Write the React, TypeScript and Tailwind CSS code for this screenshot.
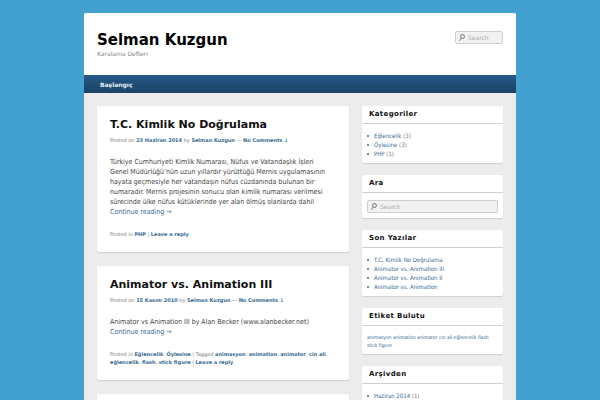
import React from 'react';

interface Post {
  title: string;
  date: string;
  body: string;
  categories: string[];
  tags: string[];
}

const posts: Post[] = [
  {
    title: 'T.C. Kimlik No Doğrulama',
    date: '23 Haziran 2014',
    body: 'Türkiye Cumhuriyeti Kimlik Numarası, Nüfus ve Vatandaşlık İşleri Genel Müdürlüğü’nün uzun yıllardır yürüttüğü Mernis uygulamasının hayata geçmesiyle her vatandaşın nüfus cüzdanında bulunan bir numaradır. Mernis projesinin sonucu olan kimlik numarası verilmesi sürecinde ülke nüfus kütüklerinde yer alan ölmüş olanlarda dahil',
    categories: ['PHP'],
    tags: [],
  },
  {
    title: 'Animator vs. Animation III',
    date: '15 Kasım 2010',
    body: 'Animator vs Animation III by Alan Becker (www.alanbecker.net)',
    categories: ['Eğlencelik', 'Öylesine'],
    tags: ['animasyon', 'animation', 'animator', 'cin ali', 'eğlencelik', 'flash', 'stick figure'],
  },
];

const categories = [
  { name: 'Eğlencelik', count: 3 },
  { name: 'Öylesine', count: 3 },
  { name: 'PHP', count: 1 },
];

const recentPosts = [
  'T.C. Kimlik No Doğrulama',
  'Animator vs. Animation III',
  'Animator vs. Animation II',
  'Animator vs. Animation',
];

const tagCloud = ['animasyon', 'animation', 'animator', 'cin ali', 'eğlencelik', 'flash', 'stick figure'];

const SearchBox: React.FC<{ id: string }> = ({ id }) => (
  <form
    className="flex h-[13px] items-center gap-[3px] rounded-xs border border-[#cfcfcf] bg-[#f1f1f1] px-[3px]"
    onSubmit={(e) => e.preventDefault()}
  >
    <label htmlFor={id} aria-label="Search" className="shrink-0">
      <svg viewBox="0 0 12 14" className="h-[7px] w-[6px]" fill="none" stroke="#777" strokeWidth="2">
        <circle cx="7" cy="5" r="4" />
        <path d="M4.5 8.5 1 13" strokeLinecap="round" />
      </svg>
    </label>
    <input
      id={id}
      type="text"
      placeholder="Search"
      className="w-full min-w-0 bg-transparent text-[6px] leading-[10px] outline-none placeholder:text-[#aaa]"
    />
  </form>
);

const LinkList: React.FC<{ items: string[] }> = ({ items }) => (
  <>
    {items.map((item, i) => (
      <React.Fragment key={item}>
        {i > 0 && ', '}
        <a href="#" className="font-bold text-[#376b92]">{item}</a>
      </React.Fragment>
    ))}
  </>
);

const PostCard: React.FC<{ post: Post }> = ({ post }) => (
  <article className="rounded-xs bg-white px-[13px] pt-3 pb-[14px] shadow-[0_1px_1px_#cfcfcf]">
    <h2 className="text-[11px] leading-[14px] font-bold text-[#111]">
      <a href="#">{post.title}</a>
    </h2>
    <p className="mt-1 text-[5px] leading-[8px] text-[#777]">
      Posted on <LinkList items={[post.date]} /> by <LinkList items={['Selman Kuzgun']} /> —{' '}
      <LinkList items={['No Comments ↓']} />
    </p>
    <div className="mt-[13px] pr-2 font-['DejaVu_Sans_Condensed','DejaVu_Sans',sans-serif] text-[7px] leading-[10px] text-[#444]">
      <p>{post.body}</p>
      <a href="#" className="text-[#376b92]">Continue reading →</a>
    </div>
    <p className="mt-[13px] text-[5px] leading-[8px] text-[#777]">
      Posted in <LinkList items={post.categories} />
      {post.tags.length > 0 && (
        <>
          {' '}| Tagged <LinkList items={post.tags} />
        </>
      )}{' '}
      | <LinkList items={['Leave a reply']} />
    </p>
  </article>
);

const Widget: React.FC<{ title: string; children: React.ReactNode }> = ({ title, children }) => (
  <section className="rounded-xs bg-white shadow-[0_1px_1px_#cfcfcf]">
    <h3 className="border-b border-[#d0d0d0] px-[7px] py-1 text-[7px] leading-[9px] font-bold tracking-wider text-[#111]">
      {title}
    </h3>
    <div className="px-[5px] pt-[7px] pb-[5px]">{children}</div>
  </section>
);

const BulletList: React.FC<{ items: { name: string; count?: number }[] }> = ({ items }) => (
  <ul className="font-['DejaVu_Sans_Condensed','DejaVu_Sans',sans-serif] text-[6px] leading-[9px] text-[#777]">
    {items.map((item) => (
      <li key={item.name} className="flex items-center before:mr-[5px] before:size-[2px] before:rounded-full before:bg-[#376b92]">
        <span>
          <a href="#" className="text-[#376b92]">{item.name}</a>
          {item.count !== undefined && ` (${item.count})`}
        </span>
      </li>
    ))}
  </ul>
);

export default function App() {
  return (
    <div className="h-screen overflow-hidden bg-[#42a1ce] pt-[13px] font-['DejaVu_Sans',sans-serif]">
      <div className="mx-auto min-h-screen max-w-[432px] overflow-hidden rounded-t-xs bg-[#ececec]">
        <header className="flex h-[62px] items-start justify-between bg-white px-[13px] pt-[18px]">
          <div>
            <h1 className="text-[15px] leading-[18px] font-bold text-black">
              <a href="#">Selman Kuzgun</a>
            </h1>
            <p className="text-[6px] leading-[9px] text-[#888]">Karalama Defteri</p>
          </div>
          <div className="w-12">
            <SearchBox id="header-search" />
          </div>
        </header>
        <nav className="flex h-[18px] items-center bg-linear-to-b from-[#24598a] to-[#1c4364] px-4">
          <a href="#" className="text-[6px] leading-[9px] font-bold text-[#e8eef3]">Başlangıç</a>
        </nav>
        <div className="grid grid-cols-[252fr_141fr] items-start gap-[13px] p-[13px]">
          <main className="flex flex-col gap-[14px]">
            {posts.map((post) => (
              <PostCard key={post.title} post={post} />
            ))}
            <article className="h-20 rounded-xs bg-white" />
          </main>
          <aside className="flex flex-col gap-3">
            <Widget title="Kategoriler">
              <BulletList items={categories} />
            </Widget>
            <Widget title="Ara">
              <SearchBox id="sidebar-search" />
            </Widget>
            <Widget title="Son Yazılar">
              <BulletList items={recentPosts.map((name) => ({ name }))} />
            </Widget>
            <Widget title="Etiket Bulutu">
              <p className="font-['DejaVu_Sans_Condensed','DejaVu_Sans',sans-serif] text-[5px] leading-[8px] text-[#376b92]">
                {tagCloud.map((tag) => (
                  <React.Fragment key={tag}>
                    <a href="#">{tag}</a>{' '}
                  </React.Fragment>
                ))}
              </p>
            </Widget>
            <Widget title="Arşivden">
              <BulletList items={[{ name: 'Haziran 2014', count: 1 }]} />
            </Widget>
          </aside>
        </div>
      </div>
    </div>
  );
}
